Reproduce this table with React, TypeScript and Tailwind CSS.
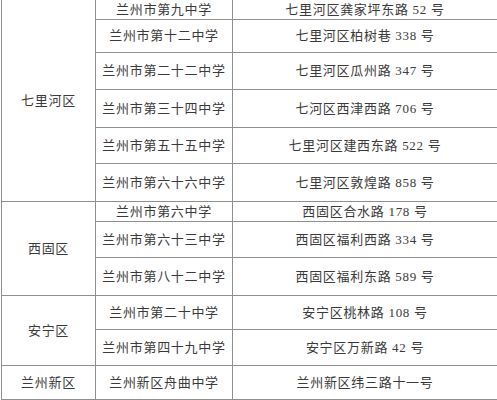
const rows = [
  { h: 'h-[19px]', school: '兰州市第九中学', addr: '七里河区龚家坪东路 52 号' },
  { h: 'h-[33px]', school: '兰州市第十二中学', addr: '七里河区柏树巷 338 号' },
  { h: 'h-[37px]', school: '兰州市第二十二中学', addr: '七里河区瓜州路 347 号' },
  { h: 'h-[38px]', school: '兰州市第三十四中学', addr: '七河区西津西路 706 号' },
  { h: 'h-[36px]', school: '兰州市第五十五中学', addr: '七里河区建西东路 522 号' },
  { h: 'h-[38px]', school: '兰州市第六十六中学', addr: '七里河区敦煌路 858 号' },
  { h: 'h-[20px]', school: '兰州市第六中学', addr: '西固区合水路 178 号' },
  { h: 'h-[36px]', school: '兰州市第六十三中学', addr: '西固区福利西路 334 号' },
  { h: 'h-[38px]', school: '兰州市第八十二中学', addr: '西固区福利东路 589 号' },
  { h: 'h-[34px]', school: '兰州市第二十中学', addr: '安宁区桃林路 108 号' },
  { h: 'h-[36px]', school: '兰州市第四十九中学', addr: '安宁区万新路 42 号' },
  { h: 'h-[34px]', school: '兰州新区舟曲中学', addr: '兰州新区纬三路十一号' },
];

// district cell starts at these row indexes
const districts: Record<number, { name: string; span: number }> = {
  0: { name: '七里河区', span: 6 },
  6: { name: '西固区', span: 3 },
  9: { name: '安宁区', span: 2 },
  11: { name: '兰州新区', span: 1 },
};

const cell = 'border border-[#8f8f8f] p-0 text-center align-middle';

export default function App() {
  return (
    <div className="w-[497px] h-[400px] overflow-hidden bg-white">
      <table
        className="ml-[1px] w-[496px] table-fixed text-[13px] leading-none tracking-[0.7px] text-[#3a3a3a]"
        style={{ fontFamily: '"Liberation Serif", "Noto Sans CJK SC", serif' }}
      >
        <colgroup>
          <col className="w-[94px]" />
          <col className="w-[137px]" />
          <col />
        </colgroup>
        <tbody>
          {rows.map((r, i) => (
            <tr key={i} className={r.h}>
              {districts[i] && (
                <td
                  rowSpan={districts[i].span}
                  className={`${cell} ${i === 0 ? 'border-t-0' : ''}`}
                >
                  {districts[i].name}
                </td>
              )}
              <td className={`${cell} ${i === 0 ? 'border-t-0' : ''}`}>{r.school}</td>
              <td className={`${cell} border-r-0 ${i === 0 ? 'border-t-0' : ''}`}>{r.addr}</td>
            </tr>
          ))}
        </tbody>
      </table>
    </div>
  );
}
